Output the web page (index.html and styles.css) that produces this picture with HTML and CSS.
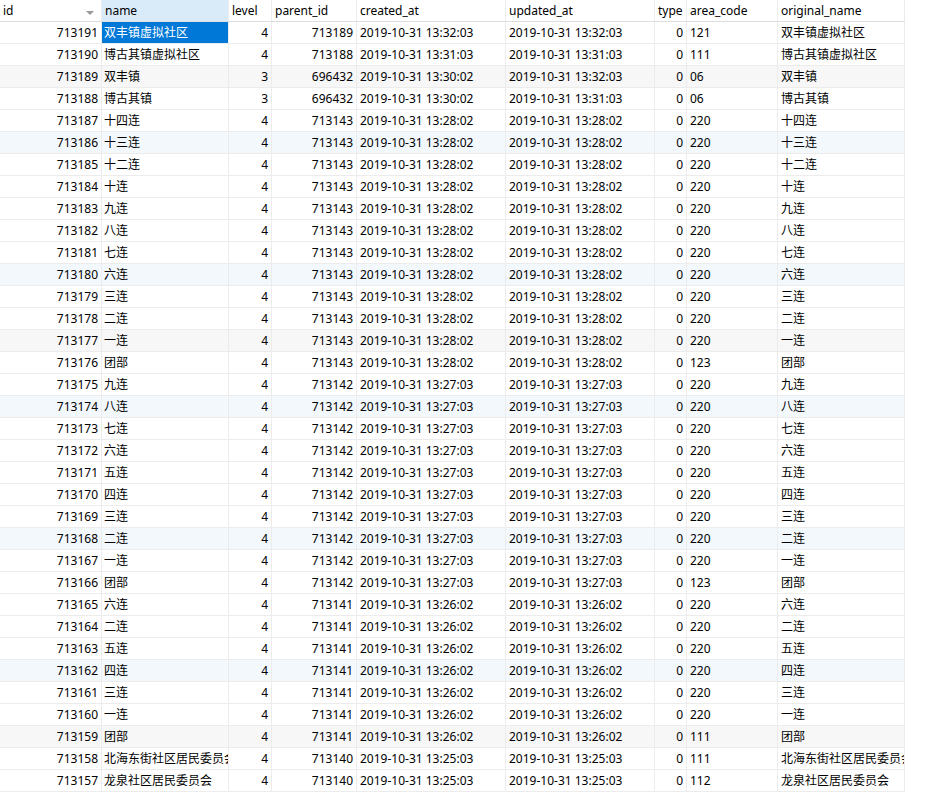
FILE: index.html
```html
<!DOCTYPE html>
<html lang="zh">
<head>
<meta charset="utf-8">
<title>Result grid</title>
<link rel="stylesheet" href="styles.css">
</head>
<body>
<div class="grid">
  <div class="row head">
    <div class="c c-id">id<span class="sort"></span></div>
    <div class="c c-name sel-col">name</div>
    <div class="c c-level">level</div>
    <div class="c c-pid">parent_id</div>
    <div class="c c-dt">created_at</div>
    <div class="c c-dt">updated_at</div>
    <div class="c c-type">type</div>
    <div class="c c-area">area_code</div>
    <div class="c c-orig">original_name</div>
  </div>
  <div class="row"><div class="c c-id num">713191</div><div class="c c-name selected">双丰镇虚拟社区</div><div class="c c-level num">4</div><div class="c c-pid num">713189</div><div class="c c-dt">2019-10-31 13:32:03</div><div class="c c-dt">2019-10-31 13:32:03</div><div class="c c-type num">0</div><div class="c c-area">121</div><div class="c c-orig">双丰镇虚拟社区</div></div>
  <div class="row"><div class="c c-id num">713190</div><div class="c c-name">博古其镇虚拟社区</div><div class="c c-level num">4</div><div class="c c-pid num">713188</div><div class="c c-dt">2019-10-31 13:31:03</div><div class="c c-dt">2019-10-31 13:31:03</div><div class="c c-type num">0</div><div class="c c-area">111</div><div class="c c-orig">博古其镇虚拟社区</div></div>
  <div class="row gray"><div class="c c-id num">713189</div><div class="c c-name">双丰镇</div><div class="c c-level num">3</div><div class="c c-pid num">696432</div><div class="c c-dt">2019-10-31 13:30:02</div><div class="c c-dt">2019-10-31 13:32:03</div><div class="c c-type num">0</div><div class="c c-area">06</div><div class="c c-orig">双丰镇</div></div>
  <div class="row"><div class="c c-id num">713188</div><div class="c c-name">博古其镇</div><div class="c c-level num">3</div><div class="c c-pid num">696432</div><div class="c c-dt">2019-10-31 13:30:02</div><div class="c c-dt">2019-10-31 13:31:03</div><div class="c c-type num">0</div><div class="c c-area">06</div><div class="c c-orig">博古其镇</div></div>
  <div class="row"><div class="c c-id num">713187</div><div class="c c-name">十四连</div><div class="c c-level num">4</div><div class="c c-pid num">713143</div><div class="c c-dt">2019-10-31 13:28:02</div><div class="c c-dt">2019-10-31 13:28:02</div><div class="c c-type num">0</div><div class="c c-area">220</div><div class="c c-orig">十四连</div></div>
  <div class="row blue"><div class="c c-id num">713186</div><div class="c c-name">十三连</div><div class="c c-level num">4</div><div class="c c-pid num">713143</div><div class="c c-dt">2019-10-31 13:28:02</div><div class="c c-dt">2019-10-31 13:28:02</div><div class="c c-type num">0</div><div class="c c-area">220</div><div class="c c-orig">十三连</div></div>
  <div class="row"><div class="c c-id num">713185</div><div class="c c-name">十二连</div><div class="c c-level num">4</div><div class="c c-pid num">713143</div><div class="c c-dt">2019-10-31 13:28:02</div><div class="c c-dt">2019-10-31 13:28:02</div><div class="c c-type num">0</div><div class="c c-area">220</div><div class="c c-orig">十二连</div></div>
  <div class="row"><div class="c c-id num">713184</div><div class="c c-name">十连</div><div class="c c-level num">4</div><div class="c c-pid num">713143</div><div class="c c-dt">2019-10-31 13:28:02</div><div class="c c-dt">2019-10-31 13:28:02</div><div class="c c-type num">0</div><div class="c c-area">220</div><div class="c c-orig">十连</div></div>
  <div class="row"><div class="c c-id num">713183</div><div class="c c-name">九连</div><div class="c c-level num">4</div><div class="c c-pid num">713143</div><div class="c c-dt">2019-10-31 13:28:02</div><div class="c c-dt">2019-10-31 13:28:02</div><div class="c c-type num">0</div><div class="c c-area">220</div><div class="c c-orig">九连</div></div>
  <div class="row"><div class="c c-id num">713182</div><div class="c c-name">八连</div><div class="c c-level num">4</div><div class="c c-pid num">713143</div><div class="c c-dt">2019-10-31 13:28:02</div><div class="c c-dt">2019-10-31 13:28:02</div><div class="c c-type num">0</div><div class="c c-area">220</div><div class="c c-orig">八连</div></div>
  <div class="row"><div class="c c-id num">713181</div><div class="c c-name">七连</div><div class="c c-level num">4</div><div class="c c-pid num">713143</div><div class="c c-dt">2019-10-31 13:28:02</div><div class="c c-dt">2019-10-31 13:28:02</div><div class="c c-type num">0</div><div class="c c-area">220</div><div class="c c-orig">七连</div></div>
  <div class="row blue"><div class="c c-id num">713180</div><div class="c c-name">六连</div><div class="c c-level num">4</div><div class="c c-pid num">713143</div><div class="c c-dt">2019-10-31 13:28:02</div><div class="c c-dt">2019-10-31 13:28:02</div><div class="c c-type num">0</div><div class="c c-area">220</div><div class="c c-orig">六连</div></div>
  <div class="row"><div class="c c-id num">713179</div><div class="c c-name">三连</div><div class="c c-level num">4</div><div class="c c-pid num">713143</div><div class="c c-dt">2019-10-31 13:28:02</div><div class="c c-dt">2019-10-31 13:28:02</div><div class="c c-type num">0</div><div class="c c-area">220</div><div class="c c-orig">三连</div></div>
  <div class="row"><div class="c c-id num">713178</div><div class="c c-name">二连</div><div class="c c-level num">4</div><div class="c c-pid num">713143</div><div class="c c-dt">2019-10-31 13:28:02</div><div class="c c-dt">2019-10-31 13:28:02</div><div class="c c-type num">0</div><div class="c c-area">220</div><div class="c c-orig">二连</div></div>
  <div class="row gray"><div class="c c-id num">713177</div><div class="c c-name">一连</div><div class="c c-level num">4</div><div class="c c-pid num">713143</div><div class="c c-dt">2019-10-31 13:28:02</div><div class="c c-dt">2019-10-31 13:28:02</div><div class="c c-type num">0</div><div class="c c-area">220</div><div class="c c-orig">一连</div></div>
  <div class="row"><div class="c c-id num">713176</div><div class="c c-name">团部</div><div class="c c-level num">4</div><div class="c c-pid num">713143</div><div class="c c-dt">2019-10-31 13:28:02</div><div class="c c-dt">2019-10-31 13:28:02</div><div class="c c-type num">0</div><div class="c c-area">123</div><div class="c c-orig">团部</div></div>
  <div class="row"><div class="c c-id num">713175</div><div class="c c-name">九连</div><div class="c c-level num">4</div><div class="c c-pid num">713142</div><div class="c c-dt">2019-10-31 13:27:03</div><div class="c c-dt">2019-10-31 13:27:03</div><div class="c c-type num">0</div><div class="c c-area">220</div><div class="c c-orig">九连</div></div>
  <div class="row blue"><div class="c c-id num">713174</div><div class="c c-name">八连</div><div class="c c-level num">4</div><div class="c c-pid num">713142</div><div class="c c-dt">2019-10-31 13:27:03</div><div class="c c-dt">2019-10-31 13:27:03</div><div class="c c-type num">0</div><div class="c c-area">220</div><div class="c c-orig">八连</div></div>
  <div class="row"><div class="c c-id num">713173</div><div class="c c-name">七连</div><div class="c c-level num">4</div><div class="c c-pid num">713142</div><div class="c c-dt">2019-10-31 13:27:03</div><div class="c c-dt">2019-10-31 13:27:03</div><div class="c c-type num">0</div><div class="c c-area">220</div><div class="c c-orig">七连</div></div>
  <div class="row"><div class="c c-id num">713172</div><div class="c c-name">六连</div><div class="c c-level num">4</div><div class="c c-pid num">713142</div><div class="c c-dt">2019-10-31 13:27:03</div><div class="c c-dt">2019-10-31 13:27:03</div><div class="c c-type num">0</div><div class="c c-area">220</div><div class="c c-orig">六连</div></div>
  <div class="row"><div class="c c-id num">713171</div><div class="c c-name">五连</div><div class="c c-level num">4</div><div class="c c-pid num">713142</div><div class="c c-dt">2019-10-31 13:27:03</div><div class="c c-dt">2019-10-31 13:27:03</div><div class="c c-type num">0</div><div class="c c-area">220</div><div class="c c-orig">五连</div></div>
  <div class="row"><div class="c c-id num">713170</div><div class="c c-name">四连</div><div class="c c-level num">4</div><div class="c c-pid num">713142</div><div class="c c-dt">2019-10-31 13:27:03</div><div class="c c-dt">2019-10-31 13:27:03</div><div class="c c-type num">0</div><div class="c c-area">220</div><div class="c c-orig">四连</div></div>
  <div class="row"><div class="c c-id num">713169</div><div class="c c-name">三连</div><div class="c c-level num">4</div><div class="c c-pid num">713142</div><div class="c c-dt">2019-10-31 13:27:03</div><div class="c c-dt">2019-10-31 13:27:03</div><div class="c c-type num">0</div><div class="c c-area">220</div><div class="c c-orig">三连</div></div>
  <div class="row blue"><div class="c c-id num">713168</div><div class="c c-name">二连</div><div class="c c-level num">4</div><div class="c c-pid num">713142</div><div class="c c-dt">2019-10-31 13:27:03</div><div class="c c-dt">2019-10-31 13:27:03</div><div class="c c-type num">0</div><div class="c c-area">220</div><div class="c c-orig">二连</div></div>
  <div class="row"><div class="c c-id num">713167</div><div class="c c-name">一连</div><div class="c c-level num">4</div><div class="c c-pid num">713142</div><div class="c c-dt">2019-10-31 13:27:03</div><div class="c c-dt">2019-10-31 13:27:03</div><div class="c c-type num">0</div><div class="c c-area">220</div><div class="c c-orig">一连</div></div>
  <div class="row"><div class="c c-id num">713166</div><div class="c c-name">团部</div><div class="c c-level num">4</div><div class="c c-pid num">713142</div><div class="c c-dt">2019-10-31 13:27:03</div><div class="c c-dt">2019-10-31 13:27:03</div><div class="c c-type num">0</div><div class="c c-area">123</div><div class="c c-orig">团部</div></div>
  <div class="row"><div class="c c-id num">713165</div><div class="c c-name">六连</div><div class="c c-level num">4</div><div class="c c-pid num">713141</div><div class="c c-dt">2019-10-31 13:26:02</div><div class="c c-dt">2019-10-31 13:26:02</div><div class="c c-type num">0</div><div class="c c-area">220</div><div class="c c-orig">六连</div></div>
  <div class="row"><div class="c c-id num">713164</div><div class="c c-name">二连</div><div class="c c-level num">4</div><div class="c c-pid num">713141</div><div class="c c-dt">2019-10-31 13:26:02</div><div class="c c-dt">2019-10-31 13:26:02</div><div class="c c-type num">0</div><div class="c c-area">220</div><div class="c c-orig">二连</div></div>
  <div class="row"><div class="c c-id num">713163</div><div class="c c-name">五连</div><div class="c c-level num">4</div><div class="c c-pid num">713141</div><div class="c c-dt">2019-10-31 13:26:02</div><div class="c c-dt">2019-10-31 13:26:02</div><div class="c c-type num">0</div><div class="c c-area">220</div><div class="c c-orig">五连</div></div>
  <div class="row blue"><div class="c c-id num">713162</div><div class="c c-name">四连</div><div class="c c-level num">4</div><div class="c c-pid num">713141</div><div class="c c-dt">2019-10-31 13:26:02</div><div class="c c-dt">2019-10-31 13:26:02</div><div class="c c-type num">0</div><div class="c c-area">220</div><div class="c c-orig">四连</div></div>
  <div class="row"><div class="c c-id num">713161</div><div class="c c-name">三连</div><div class="c c-level num">4</div><div class="c c-pid num">713141</div><div class="c c-dt">2019-10-31 13:26:02</div><div class="c c-dt">2019-10-31 13:26:02</div><div class="c c-type num">0</div><div class="c c-area">220</div><div class="c c-orig">三连</div></div>
  <div class="row"><div class="c c-id num">713160</div><div class="c c-name">一连</div><div class="c c-level num">4</div><div class="c c-pid num">713141</div><div class="c c-dt">2019-10-31 13:26:02</div><div class="c c-dt">2019-10-31 13:26:02</div><div class="c c-type num">0</div><div class="c c-area">220</div><div class="c c-orig">一连</div></div>
  <div class="row gray"><div class="c c-id num">713159</div><div class="c c-name">团部</div><div class="c c-level num">4</div><div class="c c-pid num">713141</div><div class="c c-dt">2019-10-31 13:26:02</div><div class="c c-dt">2019-10-31 13:26:02</div><div class="c c-type num">0</div><div class="c c-area">111</div><div class="c c-orig">团部</div></div>
  <div class="row"><div class="c c-id num">713158</div><div class="c c-name">北海东街社区居民委员会</div><div class="c c-level num">4</div><div class="c c-pid num">713140</div><div class="c c-dt">2019-10-31 13:25:03</div><div class="c c-dt">2019-10-31 13:25:03</div><div class="c c-type num">0</div><div class="c c-area">111</div><div class="c c-orig">北海东街社区居民委员会</div></div>
  <div class="row"><div class="c c-id num">713157</div><div class="c c-name">龙泉社区居民委员会</div><div class="c c-level num">4</div><div class="c c-pid num">713140</div><div class="c c-dt">2019-10-31 13:25:03</div><div class="c c-dt">2019-10-31 13:25:03</div><div class="c c-type num">0</div><div class="c c-area">112</div><div class="c c-orig">龙泉社区居民委员会</div></div>
</div>
</body>
</html>
```
FILE: styles.css
```css
html, body {
  margin: 0;
  padding: 0;
  background: #ffffff;
}

body {
  font-family: "Noto Sans", "Noto Sans CJK SC", sans-serif;
  font-size: 12px;
  color: #000000;
}

.grid {
  display: flex;
  flex-direction: column;
  width: 905px;
  min-height: 795px;
  border-right: 0;
  box-sizing: border-box;
}

.row {
  display: flex;
  height: 22px;
  border-bottom: 1px solid #ececec;
  box-sizing: border-box;
  background: #ffffff;
}

.row.head {
  border-bottom: 1px solid #dedede;
}

.row.gray {
  background: #f7f7f7;
}

.row.blue {
  background: #f3f8fd;
}

.c {
  box-sizing: border-box;
  border-right: 1px solid #ececec;
  padding: 0 3px 0 3px;
  line-height: 21px;
  white-space: nowrap;
  overflow: hidden;
  flex: none;
}

.head .c {
  padding-left: 3px;
  position: relative;
}

.head .sel-col {
  background: #d9ebf9;
}

.num {
  text-align: right;
}

.c-id { width: 102px; }
.c-name { width: 127px; padding-left: 2px; padding-right: 0; }
.c-level { width: 43px; }
.c-pid { width: 85px; }
.c-dt { width: 149px; }
.c-type { width: 32px; }
.c-area { width: 91px; }
.c-orig { width: 127px; padding-right: 0; }

.selected {
  background: #0078d7;
  color: #ffffff;
}

.sort {
  position: absolute;
  left: 86px;
  top: 11px;
  width: 0;
  height: 0;
  border-left: 4px solid transparent;
  border-right: 4px solid transparent;
  border-top: 4px solid #9a9a9a;
}
```
